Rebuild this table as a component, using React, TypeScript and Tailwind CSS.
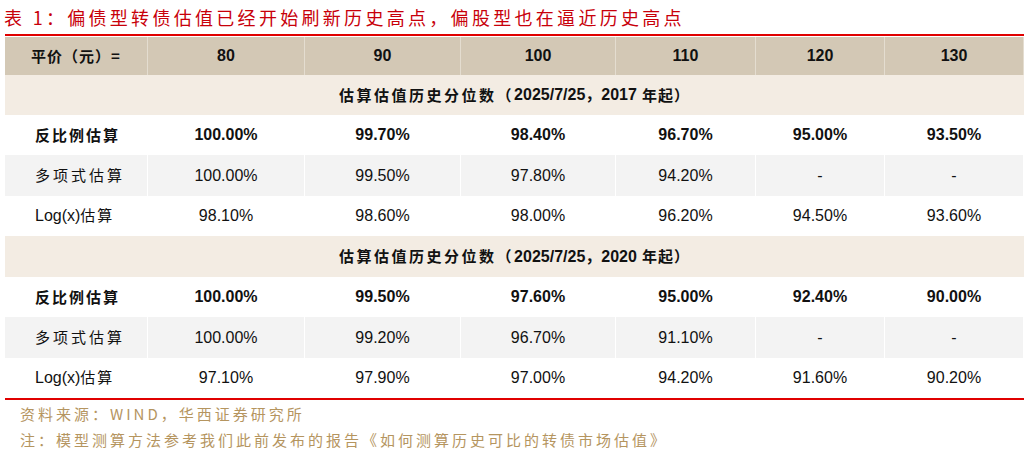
import React from "react";

const cols = ["w-[143px]", "w-[157px]", "w-[156px]", "w-[155px]", "w-[140px]", "w-[129px]", "w-[139px]"];
const cjk = "font-['Noto_Sans_CJK_SC','Noto_Sans',sans-serif]";
const num = "font-['Liberation_Sans','Noto_Sans_CJK_SC',sans-serif]";

type Row = { label: React.ReactNode; vals: string[]; bold?: boolean; gray?: boolean; h: string };

function DataRow({ r }: { r: Row }) {
  return (
    <div className={`flex ${r.h} ${r.gray ? "bg-[#f3f3f3]" : "bg-white"}`}>
      <div
        className={`${cols[0]} ${cjk} flex items-center pl-[30px] border-r border-white text-[15px] text-[#111] ${
          r.bold ? "font-bold tracking-[2px]" : "tracking-[3px]"
        }`}
      >
        {r.label}
      </div>
      {r.vals.map((v, i) => (
        <div
          key={i}
          className={`${cols[i + 1]} ${num} flex items-center justify-center border-r border-white text-[16px] text-[#111] ${
            r.bold ? "font-bold" : ""
          }`}
        >
          {v}
        </div>
      ))}
    </div>
  );
}

function Section({ year, h }: { year: string; h: string }) {
  return (
    <div className={`flex ${h} ${num} items-center justify-center bg-[#f3ece3] text-[15px] font-bold text-[#111]`}>
      <span className={`${cjk} tracking-[2.5px]`}>估算估值历史分位数（</span>
      <span className="text-[16px]">2025/7/25，{year}</span>
      <span className={`${cjk} tracking-[1px] ml-[5px]`}>年起）</span>
    </div>
  );
}

const logLabel = (
  <span className="tracking-normal">
    <span className={`${num} text-[16px] tracking-normal`}>Log(x)</span>
    <span className={`${cjk} tracking-[2px]`}>估算</span>
  </span>
);

export default function App() {
  const set1: Row[] = [
    { label: "反比例估算", vals: ["100.00%", "99.70%", "98.40%", "96.70%", "95.00%", "93.50%"], bold: true, h: "h-[40px]" },
    { label: "多项式估算", vals: ["100.00%", "99.50%", "97.80%", "94.20%", "-", "-"], gray: true, h: "h-[41px]" },
    { label: logLabel, vals: ["98.10%", "98.60%", "98.00%", "96.20%", "94.50%", "93.60%"], h: "h-[40px]" },
  ];
  const set2: Row[] = [
    { label: "反比例估算", vals: ["100.00%", "99.50%", "97.60%", "95.00%", "92.40%", "90.00%"], bold: true, h: "h-[40px]" },
    { label: "多项式估算", vals: ["100.00%", "99.20%", "96.70%", "91.10%", "-", "-"], gray: true, h: "h-[41px]" },
    { label: logLabel, vals: ["97.10%", "97.90%", "97.00%", "94.20%", "91.60%", "90.20%"], h: "h-[40px]" },
  ];
  return (
    <div className="w-[1029px] h-[449px] bg-white overflow-hidden">
      <div className={`${cjk} h-[34px] flex items-center pl-[4px] pt-[1px] text-[18px] text-[#c8000a] tracking-[3.3px]`}>
        表 1：偏债型转债估值已经开始刷新历史高点，偏股型也在逼近历史高点
      </div>
      <div className="ml-[5px] w-[1019px]">
        <div className="h-[2px] bg-[#e00000]" />
        <div className="h-[1px] bg-white" />
        <div className="flex h-[38px] bg-[#d3c8b5]">
          <div
            className={`${cols[0]} ${cjk} flex items-center justify-center border-r border-[#e4ddd0] text-[15px] font-bold tracking-[1px] text-[#111]`}
          >
            平价（元）=
          </div>
          {["80", "90", "100", "110", "120", "130"].map((v, i) => (
            <div
              key={v}
              className={`${cols[i + 1]} ${num} flex items-center justify-center border-r border-[#e4ddd0] text-[16px] font-bold text-[#111]`}
            >
              {v}
            </div>
          ))}
        </div>
        <Section year="2017" h="h-[40px]" />
        {set1.map((r, i) => (
          <DataRow key={i} r={r} />
        ))}
        <Section year="2020" h="h-[41px]" />
        {set2.map((r, i) => (
          <DataRow key={i} r={r} />
        ))}
        <div className="h-[2px] bg-[#e00000]" />
      </div>
      <div className={`${cjk} pl-[20px] pt-[1px] text-[15px] leading-[26px] text-[#b5955f] tracking-[3px]`}>
        <div>资料来源：WIND，华西证券研究所</div>
        <div>注：模型测算方法参考我们此前发布的报告《如何测算历史可比的转债市场估值》</div>
      </div>
    </div>
  );
}
